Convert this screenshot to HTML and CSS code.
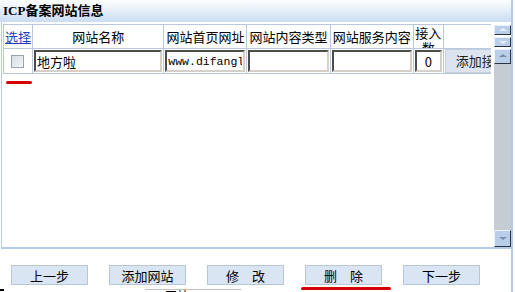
FILE: index.html
```html
<!DOCTYPE html>
<html lang="zh">
  <head>
    <meta charset="utf-8">
    <title>ICP备案网站信息</title>
    <link rel="stylesheet" href="styles.css">
  </head>
  <body>
    <div class="panel">
      <div class="title">ICP备案网站信息</div>

      <div class="list">
        <div class="grid">
          <table class="sites">
            <tr class="head">
              <td class="c-sel"><a href="#">选择</a></td>
              <td class="c-name">网站名称</td>
              <td class="c-url">网站首页网址</td>
              <td class="c-type">网站内容类型</td>
              <td class="c-serv">网站服务内容</td>
              <td class="c-num"><div class="wrap">接入数</div></td>
              <td class="c-add"></td>
            </tr>
            <tr class="row">
              <td class="c-sel"><span class="check"></span></td>
              <td class="c-name"><input class="field" type="text" value="地方啦"></td>
              <td class="c-url"><input class="field mono" type="text" value="www.difangla.com"></td>
              <td class="c-type"><input class="field" type="text" value=""></td>
              <td class="c-serv"><input class="field" type="text" value=""></td>
              <td class="c-num"><input class="field num" type="text" value="0"></td>
              <td class="c-add"><div class="addbtn">添加接入</div></td>
            </tr>
          </table>
          <div class="mark mark-check"></div>
        </div>

        <div class="scroll">
          <div class="small">
            <div class="sbtn up"></div>
            <div class="sbtn down"></div>
          </div>
          <div class="bar">
            <div class="sbtn big up"></div>
            <div class="track"></div>
            <div class="sbtn big down"></div>
          </div>
        </div>
      </div>

      <div class="buttons">
        <button class="step">上一步</button>
        <button class="step">添加网站</button>
        <button class="step">修　改</button>
        <button class="step">删　除<span class="mark mark-del"></span></button>
        <button class="step">下一步</button>
      </div>
      <div class="cutoff"><span>网站</span></div>
      <div class="corner"></div>
    </div>
  </body>
</html>
```

FILE: styles.css
```css
body {
  margin: 0;
  width: 515px;
  height: 292px;
  overflow: hidden;
  background: #ffffff;
  font-family: "Noto Sans CJK SC", "Liberation Sans", sans-serif;
  font-size: 13px;
  color: #000;
}

.panel {
  position: relative;
  width: 511px;
  height: 292px;
  border-right: 2px solid #b4cae6;
}

.title {
  height: 22px;
  line-height: 22px;
  padding-left: 3px;
  font-family: "Liberation Serif", "Noto Sans CJK SC", serif;
  font-weight: bold;
  font-size: 13px;
  background: linear-gradient(#fdfeff, #cadcf2);
}

.list {
  display: flex;
  height: 225px;
  border-left: 1px solid #b4cae6;
  margin-left: 1px;
  border-bottom: 2px solid #b4cae6;
}

.grid {
  position: relative;
  width: 489px;
  padding: 2px 0 0 1px;
}

.sites {
  border-collapse: collapse;
  table-layout: fixed;
  width: 488px;
}

.sites td {
  border: 1px solid #b8c9df;
  padding: 0;
  text-align: center;
  white-space: nowrap;
  overflow: hidden;
  height: 23px;
}

.head td {
  height: 23px;
  line-height: 23px;
}

.c-sel { width: 28px; }
.c-name { width: 130px; }
.c-url { width: 82px; }
.c-type { width: 82px; }
.c-serv { width: 82px; }
.c-num { width: 29px; }
.c-add { width: 47px; border-right: none !important; }

.c-sel a {
  color: #1a3fc0;
  text-decoration: underline;
}

.wrap {
  height: 23px;
  overflow: hidden;
  white-space: normal;
  line-height: 15px;
  margin-top: -1px;
}

.check {
  display: block;
  width: 11px;
  height: 11px;
  margin: 1px auto 0 7px;
  border: 1px solid #9aa4b0;
  background: linear-gradient(135deg, #d8dce2, #f4f5f7);
}

.field {
  display: block;
  box-sizing: border-box;
  width: calc(100% - 2px);
  height: 22px;
  margin: 0 1px;
  padding: 0 1px;
  border: 2px inset #a0a0a0;
  border-right-color: #d4d0c8;
  border-bottom-color: #d4d0c8;
  font-family: inherit;
  font-size: 13px;
  color: #000;
  background: #fff;
  outline: none;
}

.mono {
  font-family: "Liberation Mono", monospace;
  font-size: 11.5px;
}

.num {
  text-align: center;
}

.addbtn {
  height: 22px;
  line-height: 22px;
  margin-left: 1px;
  background: #dbe4ef;
  border: 1px solid #c3cfdd;
  border-right: none;
  text-align: left;
  padding-left: 10px;
  color: #222;
  overflow: hidden;
}

.mark {
  position: absolute;
  height: 3px;
  background: #d40000;
  border-radius: 2px;
}

.mark-check {
  left: 4px;
  top: 59px;
  width: 26px;
}

.scroll {
  display: flex;
  flex-direction: column;
  width: 17px;
  margin-left: 2px;
  padding-top: 3px;
}

.small {
  display: flex;
  flex-direction: column;
  gap: 2px;
  margin-bottom: 2px;
}

.sbtn {
  height: 10px;
  box-sizing: border-box;
  border: 1px solid #eaf1fa;
  border-right-color: #2c3440;
  border-bottom-color: #2c3440;
  background: #b9cee8;
  position: relative;
}

.sbtn::after {
  content: "";
  position: absolute;
  left: 4px;
  border-left: 4px solid transparent;
  border-right: 4px solid transparent;
}

.up::after {
  top: 2px;
  border-bottom: 3px solid #e8f0fa;
}

.down::after {
  top: 3px;
  border-top: 3px solid #e8f0fa;
}

.bar {
  flex: 1;
  display: flex;
  flex-direction: column;
}

.big {
  height: 15px;
}

.big.up::after {
  top: 4px;
  border-bottom-color: #7a8ea8;
}

.big.down {
  height: 17px;
}

.big.down::after {
  top: 6px;
  border-top-color: #7a8ea8;
}

.track {
  flex: 1;
  background: #c6ccd4;
}

.buttons {
  display: flex;
  gap: 21px;
  padding: 16px 0 0 11px;
}

.step {
  position: relative;
  width: 77px;
  height: 20px;
  padding: 0;
  background: #d9e5f2;
  border: 1px solid #b9c6d4;
  font-family: inherit;
  font-size: 13px;
  color: #000;
}

.mark-del {
  left: -5px;
  top: 21px;
  width: 90px;
}

.cutoff {
  position: absolute;
  left: 145px;
  top: 289px;
  width: 96px;
  height: 3px;
  border-top: 1px solid #c0c0c0;
  overflow: hidden;
  font-size: 12px;
  line-height: 12px;
}

.cutoff span {
  margin-left: 20px;
}

.corner {
  position: absolute;
  left: 0;
  top: 289px;
  width: 4px;
  height: 2px;
  background: #000;
}
```
